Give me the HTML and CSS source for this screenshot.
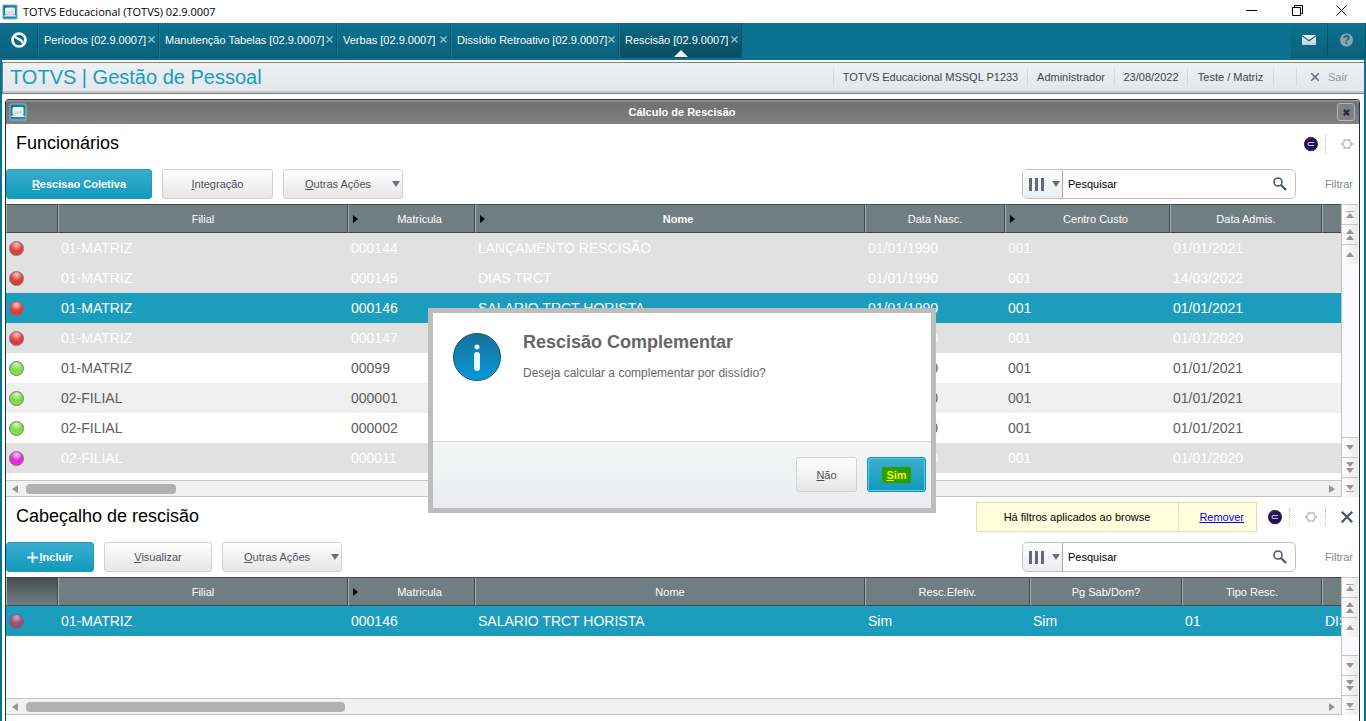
FILE: index.html
```html
<!DOCTYPE html>
<html lang="pt-BR">
<head>
<meta charset="utf-8">
<title>TOTVS Educacional (TOTVS) 02.9.0007</title>
<link rel="stylesheet" href="styles.css">
</head>
<body>
<svg class="defs" aria-hidden="true">
  <defs>
    <linearGradient id="gApp" x1="0" y1="0" x2="1" y2="1"><stop offset="0" stop-color="#17688b"/><stop offset="0.5" stop-color="#1786a8"/><stop offset="1" stop-color="#1a9dbf"/></linearGradient>
    <linearGradient id="gInfo" x1="0" y1="0" x2="0" y2="1"><stop offset="0" stop-color="#1a6f98"/><stop offset="1" stop-color="#0599dd"/></linearGradient>
    <linearGradient id="gMail" x1="0" y1="0" x2="0" y2="1"><stop offset="0" stop-color="#fff"/><stop offset="1" stop-color="#b9cdd4"/></linearGradient>
    <linearGradient id="gScreen" x1="0" y1="0" x2="0" y2="1"><stop offset="0" stop-color="#fff"/><stop offset="1" stop-color="#c3ccd8"/></linearGradient>
  </defs>
  <symbol id="app" viewBox="0 0 18 18"><rect x="1" y="1" width="16" height="16" rx="1" fill="url(#gApp)" stroke="#8fc0d0"/><rect x="4" y="4.500" width="10" height="7" rx="1" fill="url(#gScreen)" stroke="#fff" stroke-width="1"/><path d="M3.500 12h11l1.500 2H2z" fill="#dfe9ee"/></symbol>
  <symbol id="cross" viewBox="0 0 7 7"><path d="M.5.5l6 6M6.500.5l-6 6" stroke="currentColor" stroke-width="1.300" fill="none"/></symbol>
  <symbol id="boldcross" viewBox="0 0 12 12"><path d="M1.500 1.500l9 9M10.500 1.500l-9 9" stroke="currentColor" stroke-width="2" fill="none"/></symbol>
  <symbol id="gear" viewBox="0 0 14 14"><circle cx="7" cy="7" r="4" stroke="#c6c6c6" stroke-width="1.700" fill="none"/><path d="M5 3.600L4.300 2M9 3.600L9.700 2M11 7h2.200M9 10.400l.7 1.600M5 10.400L4.300 12M3 7H.8" stroke="#c6c6c6" stroke-width="2.400"/></symbol>
  <symbol id="orb" viewBox="0 0 14 14"><circle cx="7" cy="7" r="7" fill="#261250"/><path d="M2 4a6 6 0 0 1 7-3" stroke="#57205f" stroke-width="1.500" fill="none"/><path d="M3 12a6 6 0 0 0 8 0" stroke="#20228b" stroke-width="1.500" fill="none"/><path d="M10 5.500H5.500a1.500 1.500 0 0 0 0 3H10" stroke="#c9bdd8" stroke-width="1.200" fill="none"/></symbol>
  <symbol id="lens" viewBox="0 0 14 14"><circle cx="5" cy="5" r="4" fill="none" stroke="#4e5a70" stroke-width="1.600"/><path d="M8 8l5 5" stroke="#4e5a70" stroke-width="2.400"/></symbol>
  <symbol id="first" viewBox="0 0 8 8"><path d="M0 .5h8" stroke="#aaa"/><path d="M4 2l4 5H0z" fill="#959595"/></symbol>
  <symbol id="pgup" viewBox="0 0 8 12"><path d="M4 0l4 5H0zM4 6l4 5H0z" fill="#959595"/></symbol>
  <symbol id="up" viewBox="0 0 8 6"><path d="M4 0l4 5H0z" fill="#959595"/></symbol>
  <symbol id="down" viewBox="0 0 8 6"><path d="M4 5l4-5H0z" fill="#959595"/></symbol>
  <symbol id="pgdown" viewBox="0 0 8 12"><path d="M4 5l4-5H0zM4 11l4-5H0z" fill="#959595"/></symbol>
  <symbol id="last" viewBox="0 0 8 8"><path d="M0 7.500h8" stroke="#aaa"/><path d="M4 6l4-5H0z" fill="#959595"/></symbol>
  <symbol id="left" viewBox="0 0 6 8"><path d="M6 0v8L0 4z" fill="#959595"/></symbol>
  <symbol id="right" viewBox="0 0 6 8"><path d="M0 0v8l6-4z" fill="#959595"/></symbol>
</svg>

<header class="titlebar">
  <svg class="titlebar-icon"><use href="#app"/></svg>
  <span class="titlebar-text">TOTVS Educacional (TOTVS) 02.9.0007</span>
  <button class="sysbtn" aria-label="Minimizar"><svg width="11" height="11" viewBox="0 0 11 11"><path d="M0 5.500h11" stroke="#000"/></svg></button>
  <button class="sysbtn" aria-label="Restaurar"><svg width="11" height="11" viewBox="0 0 11 11"><path d="M.5 2.500h8v8h-8zM2.500 2.500v-2h8v8h-2" stroke="#000" fill="none"/></svg></button>
  <button class="sysbtn" aria-label="Fechar"><svg width="11" height="11" viewBox="0 0 11 11"><path d="M.5.5l10 10M10.500.5l-10 10" stroke="#000" fill="none"/></svg></button>
</header>

<nav class="tabs">
  <button class="home" aria-label="Início"><svg width="16" height="16" viewBox="0 0 16 16"><circle cx="8" cy="8" r="6.500" fill="none" stroke="#fff" stroke-width="2.600"/><path d="M4 4.500C5.500 7.500 11 6.500 12 11.500" stroke="#fff" stroke-width="2.400" fill="none"/></svg></button>
  <a class="tab" href="#periodos">Períodos [02.9.0007]<svg><use href="#cross"/></svg></a>
  <a class="tab" href="#tabelas">Manutenção Tabelas [02.9.0007]<svg><use href="#cross"/></svg></a>
  <a class="tab" href="#verbas">Verbas [02.9.0007]<svg><use href="#cross"/></svg></a>
  <a class="tab" href="#dissidio">Dissídio Retroativo [02.9.0007]<svg><use href="#cross"/></svg></a>
  <a class="tab active" href="#rescisao">Rescisão [02.9.0007]<svg><use href="#cross"/></svg></a>
  <span></span>
  <button class="tool" aria-label="Mensagens"><svg width="14" height="10" viewBox="0 0 14 10"><path d="M0 0h14L7 5zM0 1.500l7 5 7-5V10H0z" fill="url(#gMail)"/></svg></button>
  <button class="tool help" aria-label="Ajuda">?</button>
</nav>

<div class="shell">
  <div class="appbar">
    <h1>TOTVS | Gestão de Pessoal</h1>
    <span>TOTVS Educacional MSSQL P1233</span>
    <span>Administrador</span>
    <span>23/08/2022</span>
    <span>Teste / Matriz</span>
    <span></span>
    <button class="exit"><svg><use href="#boldcross"/></svg>Sair</button>
  </div>

  <main class="window">
    <div class="window-title">
      <svg><use href="#app"/></svg>
      <h2>Cálculo de Rescisão</h2>
      <button aria-label="Fechar janela"><svg width="7" height="7" viewBox="0 0 12 12"><path d="M1.500 1.500l9 9M10.500 1.500l-9 9" stroke="#202b48" stroke-width="4"/></svg></button>
    </div>

    <section>
      <div class="section-head">
        <h3>Funcionários</h3>
        <div class="slot"><svg><use href="#orb"/></svg></div>
        <button class="slot" aria-label="Configurar"><svg><use href="#gear"/></svg></button>
      </div>
      <div class="toolbar">
        <button class="btn primary wide"><span><u>R</u>escisao Coletiva</span></button>
        <button class="btn"><span><u>I</u>ntegração</span></button>
        <button class="btn menu"><span><u>O</u>utras Ações</span><i class="caret"></i></button>
        <div class="search">
          <button class="cols" aria-label="Colunas"><i class="bars"></i><i class="caret"></i></button>
          <input type="text" aria-label="Pesquisar" placeholder="Pesquisar">
          <button class="lens" aria-label="Buscar"><svg><use href="#lens"/></svg></button>
        </div>
        <a class="filter" href="#filtrar">Filtrar</a>
      </div>
      <div class="browse">
        <div class="grid">
          <table>
            <colgroup><col class="w52"><col class="w290"><col class="w127"><col class="w390"><col class="w140"><col class="w165"><col class="w152"><col></colgroup>
            <thead><tr><th></th><th>Filial</th><th class="sort">Matricula</th><th class="sort strong">Nome</th><th>Data Nasc.</th><th class="sort">Centro Custo</th><th>Data Admis.</th><th></th></tr></thead>
            <tbody>
              <tr class="off"><td><i class="led red"></i></td><td>01-MATRIZ</td><td>000144</td><td>LANÇAMENTO RESCISÃO</td><td>01/01/1990</td><td>001</td><td>01/01/2021</td><td></td></tr>
              <tr class="off"><td><i class="led red"></i></td><td>01-MATRIZ</td><td>000145</td><td>DIAS TRCT</td><td>01/01/1990</td><td>001</td><td>14/03/2022</td><td></td></tr>
              <tr class="sel"><td><i class="led red"></i></td><td>01-MATRIZ</td><td>000146</td><td>SALARIO TRCT HORISTA</td><td>01/01/1990</td><td>001</td><td>01/01/2021</td><td></td></tr>
              <tr class="off"><td><i class="led red"></i></td><td>01-MATRIZ</td><td>000147</td><td></td><td>01/01/1990</td><td>001</td><td>01/01/2020</td><td></td></tr>
              <tr><td><i class="led green"></i></td><td>01-MATRIZ</td><td>00099</td><td></td><td>01/01/1990</td><td>001</td><td>01/01/2021</td><td></td></tr>
              <tr class="alt"><td><i class="led green"></i></td><td>02-FILIAL</td><td>000001</td><td></td><td>01/01/1990</td><td>001</td><td>01/01/2021</td><td></td></tr>
              <tr><td><i class="led green"></i></td><td>02-FILIAL</td><td>000002</td><td></td><td>01/01/1990</td><td>001</td><td>01/01/2021</td><td></td></tr>
              <tr class="off"><td><i class="led pink"></i></td><td>02-FILIAL</td><td>000011</td><td></td><td>01/01/1990</td><td>001</td><td>01/01/2020</td><td></td></tr>
            </tbody>
          </table>
          <div class="hscroll"><svg><use href="#left"/></svg><i class="thumb"></i><svg><use href="#right"/></svg></div>
        </div>
        <div class="vscroll">
          <button aria-label="Primeiro"><svg><use href="#first"/></svg></button>
          <button aria-label="Página anterior"><svg><use href="#pgup"/></svg></button>
          <button aria-label="Anterior"><svg><use href="#up"/></svg></button>
          <span class="track"></span>
          <button aria-label="Próximo"><svg><use href="#down"/></svg></button>
          <button aria-label="Próxima página"><svg><use href="#pgdown"/></svg></button>
          <button aria-label="Último"><svg><use href="#last"/></svg></button>
        </div>
      </div>
    </section>

    <section>
      <div class="section-head">
        <h3>Cabeçalho de rescisão</h3>
        <div class="notice"><span>Há filtros aplicados ao browse</span><a href="#remover">Remover</a></div>
        <div class="slot"><svg><use href="#orb"/></svg></div>
        <button class="slot" aria-label="Configurar"><svg><use href="#gear"/></svg></button>
        <button class="slot close" aria-label="Fechar"><svg><use href="#boldcross"/></svg></button>
      </div>
      <div class="toolbar">
        <button class="btn primary add"><svg width="11" height="11" viewBox="0 0 11 11"><path d="M5.500 0v11M0 5.500h11" stroke="#fff" stroke-width="1.800"/></svg><span><u>I</u>ncluir</span></button>
        <button class="btn view"><span><u>V</u>isualizar</span></button>
        <button class="btn menu"><span><u>O</u>utras Ações</span><i class="caret"></i></button>
        <div class="search">
          <button class="cols" aria-label="Colunas"><i class="bars"></i><i class="caret"></i></button>
          <input type="text" aria-label="Pesquisar" placeholder="Pesquisar">
          <button class="lens" aria-label="Buscar"><svg><use href="#lens"/></svg></button>
        </div>
        <a class="filter" href="#filtrar2">Filtrar</a>
      </div>
      <div class="browse">
        <div class="grid">
          <table>
            <colgroup><col class="w52"><col class="w290"><col class="w127"><col class="w390"><col class="w165"><col class="w152"><col class="w140"><col></colgroup>
            <thead><tr><th class="dark"></th><th>Filial</th><th class="sort">Matricula</th><th>Nome</th><th>Resc.Efetiv.</th><th>Pg Sab/Dom?</th><th>Tipo Resc.</th><th></th></tr></thead>
            <tbody>
              <tr class="sel"><td><i class="led dim"></i></td><td>01-MATRIZ</td><td>000146</td><td>SALARIO TRCT HORISTA</td><td>Sim</td><td>Sim</td><td>01</td><td>DIS</td></tr>
            </tbody>
          </table>
          <div class="blank"></div>
          <div class="hscroll long"><svg><use href="#left"/></svg><i class="thumb"></i><svg><use href="#right"/></svg></div>
        </div>
        <div class="vscroll">
          <button aria-label="Primeiro"><svg><use href="#first"/></svg></button>
          <button aria-label="Página anterior"><svg><use href="#pgup"/></svg></button>
          <button aria-label="Anterior"><svg><use href="#up"/></svg></button>
          <span class="track"></span>
          <button aria-label="Próximo"><svg><use href="#down"/></svg></button>
          <button aria-label="Próxima página"><svg><use href="#pgdown"/></svg></button>
          <button aria-label="Último"><svg><use href="#last"/></svg></button>
        </div>
      </div>
    </section>
  </main>
</div>

<div class="dialog" role="dialog" aria-labelledby="dlg-title">
  <div class="dialog-body">
    <svg width="48" height="48" viewBox="0 0 48 48"><circle cx="24" cy="24" r="23.500" fill="url(#gInfo)" stroke="#125676"/><circle cx="24" cy="14" r="2.500" fill="#e4fbff"/><path d="M24 22v13" stroke="#e4fbff" stroke-width="6" stroke-linecap="round"/></svg>
    <div>
      <h2 id="dlg-title">Rescisão Complementar</h2>
      <p>Deseja calcular a complementar por dissídio?</p>
    </div>
  </div>
  <div class="dialog-foot">
    <button class="btn no"><span><u>N</u>ão</span></button>
    <button class="btn primary yes"><mark><u>S</u>im</mark></button>
  </div>
</div>
</body>
</html>
```
FILE: styles.css
```css
* { box-sizing: border-box; }
body {
  margin: 0;
  min-height: 100vh;
  display: flex;
  flex-direction: column;
  overflow: hidden;
  background: #0a7290;
  font: 11px/14px "Liberation Sans", Arial, sans-serif;
  color: #444;
}
button { font: inherit; color: inherit; background: none; border: 0; padding: 0; margin: 0; }
h1, h2, h3, p { margin: 0; font-weight: normal; }
svg { display: block; flex: none; }
.defs { position: absolute; width: 0; height: 0; }

.titlebar { display: flex; align-items: center; height: 23px; background: #fff; padding-left: 2px; color: #000; }
.titlebar-icon { width: 16px; height: 16px; margin-right: 5px; }
.titlebar-text { flex: 1; font: 11px/16px "Open Sans", sans-serif; }
.sysbtn { width: 46px; display: flex; justify-content: center; padding-bottom: 2px; }
.sysbtn:last-child { padding-right: 4px; }

.tabs { display: grid; grid-template-columns: 38px 121px 178px 114px 168px 123px 1fr 37px 38px; height: 35px; margin-bottom: 2px; background: #0a7290; }
.home, .tab, .tool { display: flex; align-items: center; background: linear-gradient(#0a7290, #0a627c); border-right: 1px solid #075266; border-bottom: 1px solid #07566c; }
.home { justify-content: center; }
.tab { justify-content: space-between; padding: 0 3px 0 5px; color: #fff; text-decoration: none; white-space: nowrap; border-left: 1px solid #137a97; position: relative; }
.tab svg { width: 7px; height: 7px; color: #9cc6d2; margin-bottom: 2px; }
.tab.active { background: linear-gradient(#0a6a85, #064d60); }
.tab.active::after { content: ""; position: absolute; left: 50%; bottom: 0; margin-left: -7px; border: 7px solid transparent; border-top: 0; border-bottom-color: #f0f2f4; }
.tool { justify-content: center; }
.help { font-weight: bold; font-size: 12px; color: #0a657f; background: radial-gradient(circle, #8ba3ad 6px, transparent 7px), linear-gradient(#0a7290, #0a627c); }

.shell { flex: 1; display: flex; flex-direction: column; margin: 0 2px; background: #fff; padding-top: 2px; }
.appbar { display: grid; grid-template-columns: 1fr 194px 87px 73px 86px 23px 68px; align-items: center; height: 32px; padding-bottom: 2px; border: 1px solid #808080; border-right: 0; background: linear-gradient(#eff1f3, #e2e6ea); box-shadow: inset 0 -2px #c3c6c9; flex: none; }
.appbar h1 { font-size: 20px; line-height: 24px; color: #1a9cc0; padding-left: 7px; }
.appbar span, .exit { height: 18px; line-height: 18px; border-left: 1px solid #d3d9dc; text-align: center; white-space: nowrap; }
.exit { display: flex; align-items: center; gap: 8px; padding-left: 13px; color: #91959c; }
.exit svg { width: 10px; height: 10px; color: #65697c; }

.window { flex: 1; margin: 5px 4px 0 3px; border: 1px solid #073b5c; border-top-color: #333; border-bottom: 0; border-radius: 4px 4px 0 0; overflow: hidden; background: #fff; }
.window-title { display: flex; align-items: center; height: 24px; padding: 0 4px 0 3px; background: linear-gradient(#9a9a9a, #707070 3px, #828282); color: #fff; }
.window-title > svg { width: 18px; height: 18px; }
.window-title h2 { flex: 1; text-align: center; font-size: 11px; line-height: 14px; font-weight: bold; }
.window-title button { display: flex; justify-content: center; align-items: center; width: 18px; height: 18px; border: 1px solid #b5b5b5; border-radius: 3px; background: #808080; }

.section-head { display: flex; align-items: center; height: 40px; }
.section-head h3 { flex: 1; padding: 0 0 2px 10px; font-size: 18px; line-height: 22px; color: #000; }
.slot { height: 18px; display: flex; align-items: center; padding: 0 7px 0 11px; }
.slot svg { width: 14px; height: 14px; }
button.slot { border-left: 1px dotted #bbb; padding-left: 14px; }
button.slot:last-child { padding-right: 5px; }
.close { color: #46566c; }
.notice { display: flex; height: 30px; line-height: 28px; background: #ffffdc; border: 1px solid #dfe0b0; color: #000; white-space: nowrap; }
.notice span { padding: 0 28px 0 27px; }
.notice a { padding: 0 12px 0 20px; border-left: 1px dotted #c9c9a8; color: #00f; }

.toolbar { display: flex; align-items: center; gap: 10px; height: 40px; }
.btn { display: flex; align-items: center; justify-content: center; height: 30px; width: 111px; border: 1px solid #d0d2d3; border-radius: 3px; background: linear-gradient(#fff, #e6e6e7); color: #4d5159; white-space: nowrap; }
.btn.primary { color: #fff; font-weight: bold; border-color: #249bbd; background: linear-gradient(#3aadce, #129abd); }
.btn.wide { width: 146px; }
.btn.add { width: 88px; gap: 1px; }
.btn.view { width: 108px; }
.btn.menu { width: 120px; justify-content: space-between; padding: 0 2px 0 21px; }
.caret { border: 4px solid transparent; border-top: 6px solid #66707f; border-bottom: 0; }
.search { display: flex; width: 274px; height: 30px; margin-left: auto; border: 1px solid #bfc1c3; border-radius: 5px; overflow: hidden; background: #fff; }
.cols { display: flex; align-items: center; justify-content: space-between; width: 40px; padding: 0 2px 0 6px; border-right: 1px solid #aaa; background: linear-gradient(#fff, #ececee); }
.bars { width: 15px; height: 13px; background: repeating-linear-gradient(90deg, #62677c 0 3px, transparent 3px 6px); }
.search input { flex: 1; min-width: 0; border: 0; padding: 0 5px; font: inherit; color: #000; background: none; }
.search input::placeholder { color: #000; opacity: 1; }
.lens { width: 30px; display: flex; align-items: center; justify-content: center; }
.lens svg { width: 14px; height: 14px; }
.filter { width: 53px; padding-right: 6px; text-align: right; color: #85888d; text-decoration: none; }

.browse { display: flex; padding-right: 1px; }
.grid { flex: 1; min-width: 0; overflow: hidden; display: flex; flex-direction: column; }
table { width: 100%; table-layout: fixed; border-collapse: separate; border-spacing: 0; }
.w52 { width: 52px; }
.w290 { width: 290px; }
.w127 { width: 127px; }
.w390 { width: 390px; }
.w140 { width: 140px; }
.w152 { width: 152px; }
.w165 { width: 165px; }
th { height: 29px; padding: 0; background: #6e7e83; border: 1px solid #43484b; border-left-color: #a5adb0; font-weight: normal; color: #fff; text-align: center; }
th:last-child { border-right: 0; }
th.sort { padding-left: 16px; position: relative; }
.sort::before { content: ""; position: absolute; left: 4px; top: 10px; border: 4px solid transparent; border-left: 5px solid #000; border-right: 0; }
th.strong { font-weight: bold; }
th.dark { background: linear-gradient(#454d50, #6e7e83); }
td { height: 30px; padding: 0 0 0 3px; font-size: 14px; line-height: 18px; color: #5d5d5d; white-space: nowrap; overflow: hidden; }
tr.off td { background: #e1e1e1; color: #fff; }
tr.sel td { background: #1d9dbe; color: #fff; }
tr.alt td { background: #f0f0f0; }
.led { display: block; width: 15px; height: 15px; border: 1px solid #777; border-radius: 50%; }
.red { background: radial-gradient(circle at 50% 20%, #f7b0b0 1px, #e0403c 6px, #f02c2c); }
.green { background: radial-gradient(circle at 50% 20%, #c8f0a8 1px, #80d848 6px, #83ec38); }
.pink { background: radial-gradient(circle at 50% 20%, #f8b0f4 1px, #dd2ad8 6px, #f030ec); }
.dim { background: radial-gradient(circle at 50% 20%, #c0a0b8 1px, #a04c70 6px, #b84464); border-color: #55708a; }
.blank { height: 55px; }
.hscroll { display: flex; align-items: center; height: 17px; margin-top: 7px; padding: 0 6px; border: solid #c4c6c6; border-width: 1px 0; background: #f1f1f1; }
.hscroll svg { width: 6px; height: 8px; }
.thumb { width: 150px; height: 10px; margin: 0 auto 0 8px; border-radius: 4px; background: #b1b1b1; }
.long .thumb { width: 319px; }
.vscroll { display: flex; flex-direction: column; width: 17px; border-left: 1px solid #c4c6c6; background: #fafafc; }
.vscroll button { display: flex; align-items: center; justify-content: center; height: 20px; border-top: 1px solid #c4c6c6; background: linear-gradient(90deg, #fff, #e9eaec); }
.vscroll svg { width: 8px; height: 12px; }
.track { flex: 1; }

.dialog { position: absolute; top: 308px; left: 50%; margin-left: -255px; width: 508px; border: 5px solid #bdbdbd; background: #fff; }
.dialog-body { display: flex; gap: 22px; height: 128px; padding: 20px; }
.dialog h2 { font-size: 18px; line-height: 18px; font-weight: bold; color: #666; }
.dialog p { margin-top: 14px; font-size: 12px; line-height: 16px; color: #666; }
.dialog-foot { display: flex; justify-content: flex-end; gap: 10px; height: 67px; padding: 15px 5px 0 0; border-top: 1px solid #d4d5d5; background: linear-gradient(#f4f5f4, #ebecef); }
.dialog-foot .btn { height: 35px; }
.btn.no { width: 61px; }
.btn.yes { width: 59px; border-color: #1b8fb3; box-shadow: inset 0 0 0 1px #4fd0f5; }
mark { padding: 1px 4px; background: #28a000; color: #fff200; }
```
